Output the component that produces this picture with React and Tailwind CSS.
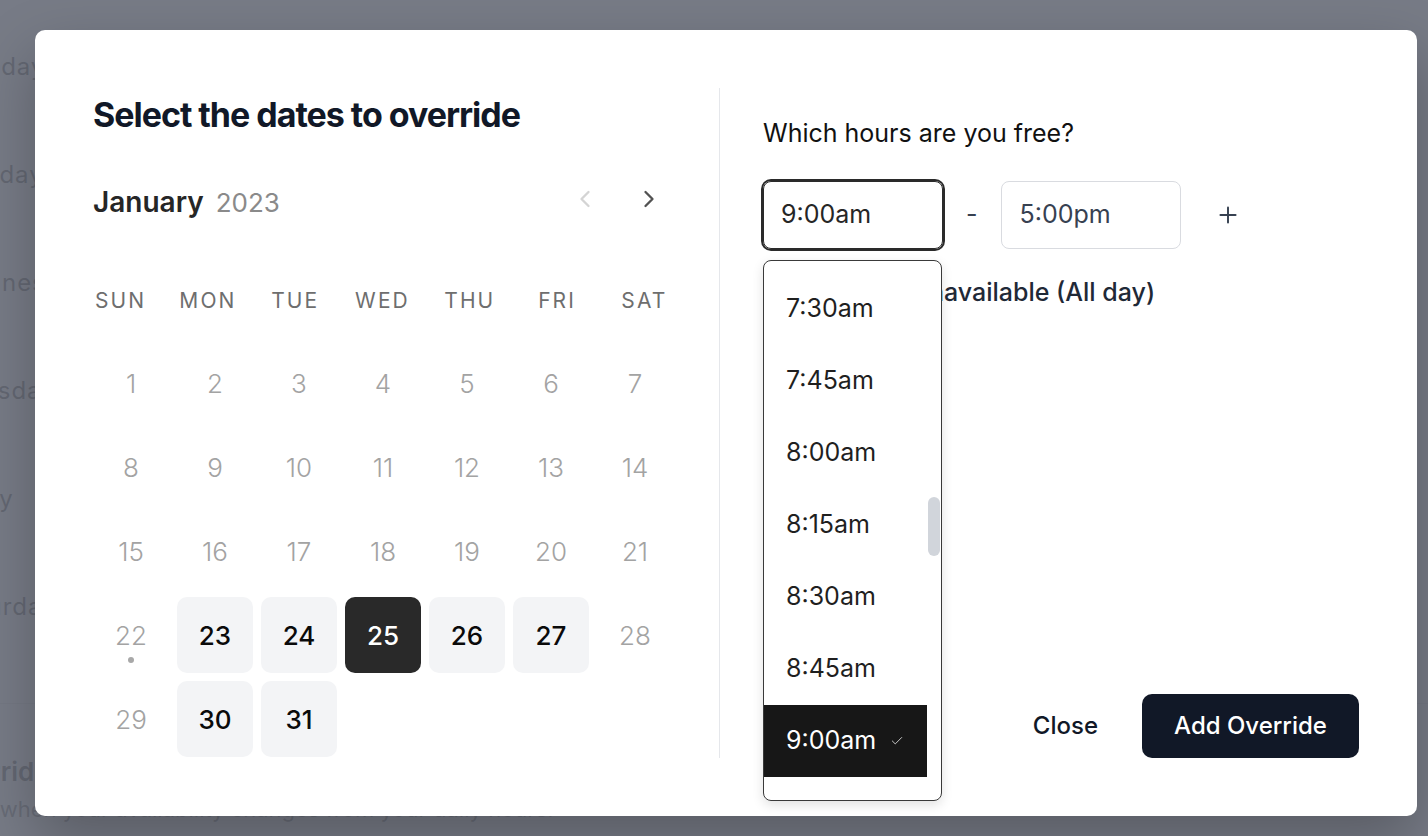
import React from "react";
import { ChevronLeft, ChevronRight, Plus, Check } from "lucide-react";

const weekdays = ["Sun", "Mon", "Tue", "Wed", "Thu", "Fri", "Sat"];
const bgDays = [
  { d: "Monday", c: "ml-[-52px]" },
  { d: "Tuesday", c: "ml-[-59px]" },
  { d: "Wednesday", c: "ml-[-52px]" },
  { d: "Thursday", c: "ml-[-59px]" },
  { d: "Friday", c: "ml-[-62px]" },
  { d: "Saturday", c: "ml-[-52px]" },
];
const times = ["7:15am", "7:30am", "7:45am", "8:00am", "8:15am", "8:30am", "8:45am", "9:00am", "9:15am"];

function DayCell({ d }) {
  if (d === null) return <div className="h-[76px]" />;
  const available = [23, 24, 26, 27, 30, 31].includes(d);
  const selected = d === 25;
  if (selected) {
    return (
      <div className="flex h-[76px] items-center justify-center rounded-[10px] bg-[#292929] text-[26px] font-medium text-white">
        {d}
      </div>
    );
  }
  if (available) {
    return (
      <div className="flex h-[76px] items-center justify-center rounded-[10px] bg-[#f3f4f6] text-[26px] font-medium text-[#0a0a0a]">
        {d}
      </div>
    );
  }
  return (
    <div className="relative flex h-[76px] items-center justify-center text-[26px] font-light text-[#a3a3a3]">
      {d}
      {d === 22 && <span className="absolute bottom-[10px] left-1/2 h-[6px] w-[6px] -translate-x-1/2 rounded-full bg-[#a8a8a8]" />}
    </div>
  );
}

export default function App() {
  const cells = [];
  for (let i = 1; i <= 31; i++) cells.push(i);
  while (cells.length < 35) cells.push(null);

  return (
    <div className="relative h-[836px] w-[1428px] overflow-hidden bg-white font-['Inter',sans-serif]">
      {/* background page */}
      <div className="flex flex-col pt-[13px]">
        {bgDays.map(({ d, c }) => (
          <div key={d} className={`${c} flex h-[108px] items-center whitespace-nowrap text-[24px] tracking-[0.04em] text-black`}>
            {d}
          </div>
        ))}
        <div className="mt-[42px] border-t border-[#d8d8d8]" />
        <div className="ml-[-120px] mt-[48px] whitespace-nowrap text-[26px] font-semibold text-black">Date overrides</div>
        <div className="ml-[-112px] mt-[2px] whitespace-nowrap text-[22px] text-[#333]">
          Add dates when your availability changes from your daily hours.
        </div>
      </div>

      {/* overlay */}
      <div className="absolute inset-0 bg-[rgba(107,112,124,0.92)]" />

      {/* modal */}
      <div className="absolute left-[35px] top-[30px] flex h-[786px] w-[1382px] rounded-[10px] bg-white p-[58px] shadow-[0_25px_60px_rgba(0,0,0,0.25)]">
        {/* left */}
        <div className="mr-[44px] flex w-[582px] flex-col">
          <div className="flex h-[52px] items-center whitespace-nowrap text-[34px] font-bold tracking-[-0.03em] text-[#111827]">
            Select the dates to override
          </div>
          <div className="mt-[42px] flex h-[40px] items-center justify-between">
            <div className="flex items-baseline gap-[12px]">
              <span className="text-[28px] font-semibold text-[#262626]">January</span>
              <span className="text-[26px] font-normal text-[#8a8a8a]">2023</span>
            </div>
            <div className="mb-[6px] mr-[12px] flex items-center gap-[36px]">
              <ChevronLeft size={28} strokeWidth={2} className="text-[#d4d4d4]" />
              <ChevronRight size={28} strokeWidth={2} className="text-[#525252]" />
            </div>
          </div>
          <div className="ml-[-16px] mt-[67px] grid w-[611px] grid-cols-7">
            {weekdays.map((w) => (
              <div key={w} className="flex h-[24px] items-center justify-center text-[21px] uppercase tracking-[0.1em] text-[#6e6e6e]">
                {w}
              </div>
            ))}
          </div>
          <div className="mt-[32px] grid w-[580px] grid-cols-7 gap-[8px]">
            {cells.map((d, i) => (
              <DayCell key={i} d={d} />
            ))}
          </div>
        </div>

        {/* divider */}
        <div className="w-px bg-[#e5e7eb]" />

        {/* right */}
        <div className="flex flex-1 flex-col pl-[43px]">
          <div className="pt-[30px] text-[25px] leading-[30px] text-[#111]">Which hours are you free?</div>
          <div className="mt-[33px] flex items-center">
            <div className="relative">
              <div className="flex h-[68px] w-[180px] items-center rounded-[8px] border border-[#2a2a2a] pl-[17px] text-[25px] text-[#262626] ring-2 ring-[#2a2a2a]">
                9:00am
              </div>
              {/* dropdown */}
              <div className="absolute left-0 top-[79px] z-10 flex h-[541px] w-[179px] overflow-hidden rounded-[8px] border border-[#3a3a3a] bg-white shadow-[0_4px_12px_rgba(0,0,0,0.12)]">
                <div className="flex flex-1 flex-col">
                  <div className="mt-[-60px] flex flex-col">
                    {times.map((t) => {
                      const sel = t === "9:00am";
                      return (
                        <div
                          key={t}
                          className={
                            sel
                              ? "flex h-[72px] shrink-0 items-center gap-[14px] bg-[#171717] pl-[22px] text-[25px] text-white"
                              : "flex h-[72px] shrink-0 items-center pl-[22px] text-[25px] text-[#1f1f1f]"
                          }
                        >
                          {t}
                          {sel && <Check size={14} strokeWidth={1.6} className="text-[#d4d4d4]" />}
                        </div>
                      );
                    })}
                  </div>
                </div>
                <div className="w-[14px] pl-[1px] pt-[236px]">
                  <div className="h-[59px] w-[12px] rounded-full bg-[#d1d5db]" />
                </div>
              </div>
            </div>
            <div className="mx-[23px] text-[25px] text-[#374151]">-</div>
            <div className="flex h-[68px] w-[180px] items-center rounded-[8px] border border-[#d9dbe0] pl-[18px] text-[25px] text-[#374151]">
              5:00pm
            </div>
            <div className="ml-[27px] flex w-[40px] items-center justify-center">
              <Plus size={26} strokeWidth={1.8} className="text-[#374151]" />
            </div>
          </div>
          <div className="mt-[26px] flex h-[36px] items-center">
            <div className="h-[32px] w-[58px] rounded-full bg-[#e5e7eb]" />
            <span className="w-[123px] whitespace-nowrap text-right text-[25px] font-medium text-[#1f2937]">Mark un</span>
            <span className="whitespace-nowrap text-[25px] font-medium text-[#1f2937]">available (All day)</span>
          </div>
          <div className="mt-auto flex items-center justify-end gap-[11px]">
            <button className="flex h-[64px] items-center px-[33px] text-[24px] font-medium text-[#111827]">Close</button>
            <button className="flex h-[64px] w-[217px] items-center justify-center rounded-[10px] bg-[#111827] text-[24px] font-medium text-white">
              Add Override
            </button>
          </div>
        </div>
      </div>
    </div>
  );
}
